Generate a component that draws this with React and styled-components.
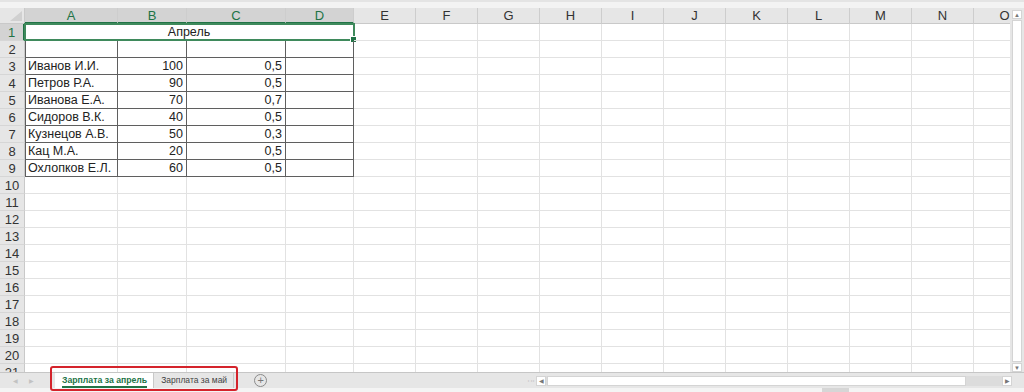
import React from "react";
import styled, { createGlobalStyle } from "styled-components";

const GREEN = "#217346";
const GRID = "#e2e2e2";
const DARK = "#5f5f5f";

const GlobalStyle = createGlobalStyle`
  body {
    margin: 0;
    background: #fff;
    font-family: "Liberation Sans", Arial, sans-serif;
    overflow: hidden;
  }
`;

const Window = styled.div`
  width: 1024px;
  height: 392px;
  display: flex;
  flex-direction: column;
  background: #fff;
  overflow: hidden;
`;

const TopStrip = styled.div`
  height: 8px;
  flex: none;
  background: #f3f3f3;
  border-top: 2px solid #e4e4e4;
  box-sizing: border-box;
`;

const Main = styled.div`
  height: 364px;
  flex: none;
  display: flex;
`;

const Sheet = styled.div`
  flex: 1;
  display: grid;
  grid-template-columns: 25px 93px 69px 99px 68px repeat(11, 62px);
  grid-template-rows: 16px;
  grid-auto-rows: 17px;
  overflow: hidden;
  font-size: 12.5px;
  color: #222;
`;

const Corner = styled.div`
  position: relative;
  background: #e6e6e6;
  border-right: 1px solid #c9c9c9;
  border-bottom: 1px solid #c9c9c9;
  box-sizing: border-box;
  &::after {
    content: "";
    position: absolute;
    right: 2px;
    bottom: 2px;
    border-left: 12px solid transparent;
    border-bottom: 10px solid #d0d0d0;
  }
`;

const ColHead = styled.div`
  background: ${(p) => (p.$selected ? "#d3d3d3" : "#e6e6e6")};
  color: ${(p) => (p.$selected ? GREEN : "#333")};
  border-right: 1px solid #cdcdcd;
  border-bottom: ${(p) => (p.$selected ? `2px solid ${GREEN}` : "1px solid #c9c9c9")};
  box-sizing: border-box;
  text-align: center;
  line-height: 15px;
  font-size: 13px;
`;

const RowHead = styled.div`
  background: ${(p) => (p.$selected ? "#d3d3d3" : "#e6e6e6")};
  color: ${(p) => (p.$selected ? GREEN : "#333")};
  border-right: ${(p) => (p.$selected ? `2px solid ${GREEN}` : "1px solid #c9c9c9")};
  border-bottom: 1px solid #d6d6d6;
  box-sizing: border-box;
  text-align: center;
  line-height: 17px;
  font-size: 13px;
`;

const Cell = styled.div`
  position: relative;
  box-sizing: border-box;
  border-right: 1px solid ${(p) => (p.$box ? DARK : GRID)};
  border-bottom: 1px solid ${(p) => (p.$box ? DARK : GRID)};
  box-shadow: ${(p) => (p.$first ? `inset 1px 0 0 ${DARK}` : "none")};
  grid-column: ${(p) => (p.$span ? `span ${p.$span}` : "auto")};
  text-align: ${(p) => p.$align || "left"};
  padding: 0 3px;
  line-height: 17px;
  white-space: nowrap;
  overflow: hidden;
`;

const Merged = styled(Cell)`
  overflow: visible;
`;

const Selection = styled.div`
  position: absolute;
  top: -1px;
  left: -1px;
  right: -2px;
  bottom: -1px;
  border: 2px solid #3f8a5c;
  pointer-events: none;
  &::after {
    content: "";
    position: absolute;
    right: -4px;
    bottom: -4px;
    width: 5px;
    height: 5px;
    background: ${GREEN};
    border: 1px solid #fff;
  }
`;

const VScroll = styled.div`
  width: 14px;
  flex: none;
  background: #e6e6e6;
  display: flex;
  flex-direction: column;
  padding: 2px 2px 0 2px;
  box-sizing: border-box;
`;

const ScrollButton = styled.div`
  width: 10px;
  height: 9px;
  flex: none;
  background: #fff;
  border: 1px solid #d4d4d4;
  box-sizing: border-box;
  display: flex;
  align-items: center;
  justify-content: center;
  color: #777;
  font-size: 6px;
  line-height: 1;
`;

const VThumb = styled.div`
  flex: 1;
  margin: 1px 0;
  background: #fff;
  border: 1px solid #d4d4d4;
`;

const TabBar = styled.div`
  height: 16px;
  flex: none;
  display: flex;
  align-items: stretch;
  background: #e6e6e6;
  border-top: 1px solid #c6c6c6;
  box-sizing: border-box;
`;

const Nav = styled.div`
  width: 55px;
  flex: none;
  display: flex;
  align-items: center;
  gap: 11px;
  padding-left: 13px;
  box-sizing: border-box;
  color: #c2c2c2;
  font-size: 6px;
`;

const Tabs = styled.div`
  position: relative;
  display: flex;
  &::after {
    content: "";
    position: absolute;
    top: -7px;
    bottom: -3px;
    left: -5px;
    right: -4px;
    border: 2px solid #d4232b;
    border-radius: 3px;
    pointer-events: none;
  }
`;

const Tab = styled.div`
  display: flex;
  align-items: center;
  padding: 0 6px 0 7px;
  background: ${(p) => (p.$active ? "#fff" : "transparent")};
  border-right: 1px solid #c9c9c9;
  color: ${(p) => (p.$active ? GREEN : "#444")};
  font-weight: ${(p) => (p.$active ? "bold" : "normal")};
  font-size: ${(p) => (p.$active ? "8.7px" : "8.5px")};
  white-space: nowrap;
`;

const TabLabel = styled.span`
  border-bottom: 2px solid ${(p) => (p.$active ? GREEN : "transparent")};
  padding-top: 2px;
  line-height: 11px;
`;

const AddSheet = styled.div`
  width: 11px;
  height: 11px;
  margin: auto 0 auto 20px;
  border: 1px solid #8a8a8a;
  border-radius: 50%;
  color: #777;
  display: flex;
  align-items: center;
  justify-content: center;
  font-size: 11px;
  line-height: 1;
`;

const Splitter = styled.div`
  margin-left: auto;
  width: 9px;
  display: flex;
  justify-content: center;
  align-items: center;
  color: #b8b8b8;
  font-size: 8px;
  letter-spacing: -1px;
  writing-mode: vertical-rl;
`;

const HScroll = styled.div`
  width: 476px;
  margin: 3px 12px 2px 0;
  display: flex;
  background: #dcdcdc;
`;

const HButton = styled(ScrollButton)`
  width: 10px;
  height: 100%;
`;

const HThumb = styled.div`
  width: 419px;
  margin-left: 1px;
  background: #fff;
  border: 1px solid #d4d4d4;
  box-sizing: border-box;
`;

const HTrack = styled.div`
  flex: 1;
`;

const BottomStrip = styled.div`
  flex: 1;
  background: #f4f4f4;
  display: flex;
`;

const StatusNub = styled.div`
  width: 27px;
  margin-left: 822px;
  background: #d6d6d6;
`;

const COLS = ["A", "B", "C", "D", "E", "F", "G", "H", "I", "J", "K", "L", "M", "N", "O"];

const people = [
  ["Иванов И.И.", "100", "0,5"],
  ["Петров Р.А.", "90", "0,5"],
  ["Иванова Е.А.", "70", "0,7"],
  ["Сидоров В.К.", "40", "0,5"],
  ["Кузнецов А.В.", "50", "0,3"],
  ["Кац М.А.", "20", "0,5"],
  ["Охлопков Е.Л.", "60", "0,5"],
];

function EmptyCells({ from }) {
  return COLS.slice(from).map((c) => <Cell key={c} />);
}

function DataRow({ n, values }) {
  const [name, b, c] = values || ["", "", ""];
  return (
    <>
      <RowHead>{n}</RowHead>
      <Cell $box $first>{name}</Cell>
      <Cell $box $align="right">{b}</Cell>
      <Cell $box $align="right">{c}</Cell>
      <Cell $box />
      <EmptyCells from={4} />
    </>
  );
}

export default function App() {
  const emptyRows = [];
  for (let n = 10; n <= 22; n++) {
    emptyRows.push(
      <React.Fragment key={n}>
        <RowHead>{n}</RowHead>
        <EmptyCells from={0} />
      </React.Fragment>
    );
  }

  return (
    <Window>
      <GlobalStyle />
      <TopStrip />
      <Main>
        <Sheet>
          <Corner />
          {COLS.map((c, i) => (
            <ColHead key={c} $selected={i < 4}>{c}</ColHead>
          ))}

          <RowHead $selected>1</RowHead>
          <Merged $box $span={4} $align="center">
            Апрель
            <Selection />
          </Merged>
          <EmptyCells from={4} />

          <DataRow n={2} />
          {people.map((p, i) => (
            <DataRow key={i} n={i + 3} values={p} />
          ))}
          {emptyRows}
        </Sheet>
        <VScroll>
          <ScrollButton>▲</ScrollButton>
          <VThumb />
          <ScrollButton>▼</ScrollButton>
        </VScroll>
      </Main>
      <TabBar>
        <Nav>
          <span>◀</span>
          <span>▶</span>
        </Nav>
        <Tabs>
          <Tab $active>
            <TabLabel $active>Зарплата за апрель</TabLabel>
          </Tab>
          <Tab>
            <TabLabel>Зарплата за май</TabLabel>
          </Tab>
        </Tabs>
        <AddSheet>+</AddSheet>
        <Splitter>⋮</Splitter>
        <HScroll>
          <HButton>◀</HButton>
          <HThumb />
          <HTrack />
          <HButton>▶</HButton>
        </HScroll>
      </TabBar>
      <BottomStrip>
        <StatusNub />
      </BottomStrip>
    </Window>
  );
}
